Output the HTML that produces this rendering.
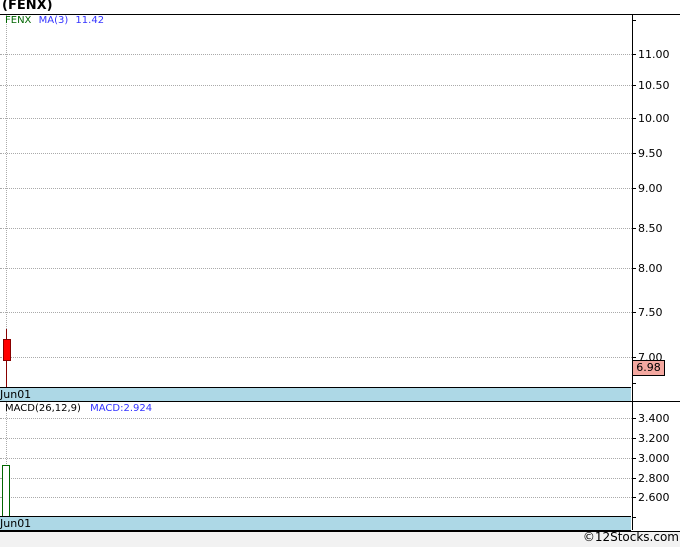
<!DOCTYPE html>
<html><head><style>
body{margin:0;width:680px;height:546px;background:#fff;position:relative;overflow:hidden;font-family:Verdana,"DejaVu Sans",sans-serif;}
.a{position:absolute}
.g{position:absolute;left:0;width:632px;border-top:1px dotted #aaa;height:0}
.lb{position:absolute;left:638px;font-size:11px;color:#000}
.tk{position:absolute;left:632px;width:4px;border-top:1px solid #000}
</style></head><body>
<div class="a" style="left:2px;top:-2px;font-size:13px;font-weight:bold;font-family:'DejaVu Sans',sans-serif">(FENX)</div>
<div class="a" style="left:0;top:14px;width:680px;border-top:1px solid #000"></div>
<div class="a" style="left:632px;top:14px;height:516px;border-left:1px solid #000"></div>
<div class="a" style="left:6px;top:15px;height:372px;border-left:1px dotted #aaa"></div>
<div class="a" style="left:6px;top:402px;height:114px;border-left:1px dotted #aaa"></div>
<div class="a" style="left:5px;top:15px;font-size:10px;color:#060"><span>FENX</span> <span style="color:#33f;margin-left:4px">MA(3)</span> <span style="color:#33f;margin-left:4px">11.42</span></div>
<div class="g" style="top:54px"></div><div class="tk" style="top:54px"></div><div class="lb" style="top:48px">11.00</div>
<div class="g" style="top:85px"></div><div class="tk" style="top:85px"></div><div class="lb" style="top:79px">10.50</div>
<div class="g" style="top:118px"></div><div class="tk" style="top:118px"></div><div class="lb" style="top:112px">10.00</div>
<div class="g" style="top:153px"></div><div class="tk" style="top:153px"></div><div class="lb" style="top:147px">9.50</div>
<div class="g" style="top:188px"></div><div class="tk" style="top:188px"></div><div class="lb" style="top:182px">9.00</div>
<div class="g" style="top:228px"></div><div class="tk" style="top:228px"></div><div class="lb" style="top:222px">8.50</div>
<div class="g" style="top:268px"></div><div class="tk" style="top:268px"></div><div class="lb" style="top:262px">8.00</div>
<div class="g" style="top:312px"></div><div class="tk" style="top:312px"></div><div class="lb" style="top:306px">7.50</div>
<div class="g" style="top:357px"></div><div class="tk" style="top:357px"></div><div class="lb" style="top:351px">7.00</div>
<div class="tk" style="top:20px"></div><div class="tk" style="top:383px"></div>
<div class="a" style="left:6px;top:329px;height:58px;border-left:1px solid #800"></div>
<div class="a" style="left:3px;top:339px;width:6px;height:20px;background:#f00;border:1px solid #800"></div>
<div class="a" style="left:632px;top:360px;width:31px;height:14px;background:#f4a8a0;border:1px solid #000;font-size:11px;text-align:center;line-height:14px">6.98</div>
<div class="a" style="left:0;top:387px;width:631px;height:13px;background:#add8e6;border-top:1px solid #000;border-bottom:1px solid #000;font-size:11px;line-height:13px">Jun01</div>
<div class="a" style="left:0;top:401px;width:680px;border-top:1px solid #000"></div>
<div class="a" style="left:5px;top:403px;font-size:10px;color:#000">MACD(26,12,9) <span style="color:#33f;margin-left:6px">MACD:2.924</span></div>
<div class="g" style="top:418px"></div><div class="tk" style="top:418px"></div><div class="lb" style="top:412px">3.400</div>
<div class="g" style="top:438px"></div><div class="tk" style="top:438px"></div><div class="lb" style="top:432px">3.200</div>
<div class="g" style="top:458px"></div><div class="tk" style="top:458px"></div><div class="lb" style="top:452px">3.000</div>
<div class="g" style="top:478px"></div><div class="tk" style="top:478px"></div><div class="lb" style="top:472px">2.800</div>
<div class="g" style="top:497px"></div><div class="tk" style="top:497px"></div><div class="lb" style="top:491px">2.600</div>
<div class="tk" style="top:517px"></div>
<div class="a" style="left:2px;top:465px;width:6px;height:51px;background:#fff;border:1px solid #060;border-bottom:none"></div>
<div class="a" style="left:0;top:516px;width:631px;height:13px;background:#add8e6;border-top:1px solid #000;border-bottom:1px solid #000;font-size:11px;line-height:13px">Jun01</div>
<div class="a" style="left:0;top:531px;width:680px;height:15px;background:#f2f2f2;border-top:1px solid #000"></div>
<div class="a" style="right:1px;top:530px;font-size:12px">©12Stocks.com</div>
</body></html>
